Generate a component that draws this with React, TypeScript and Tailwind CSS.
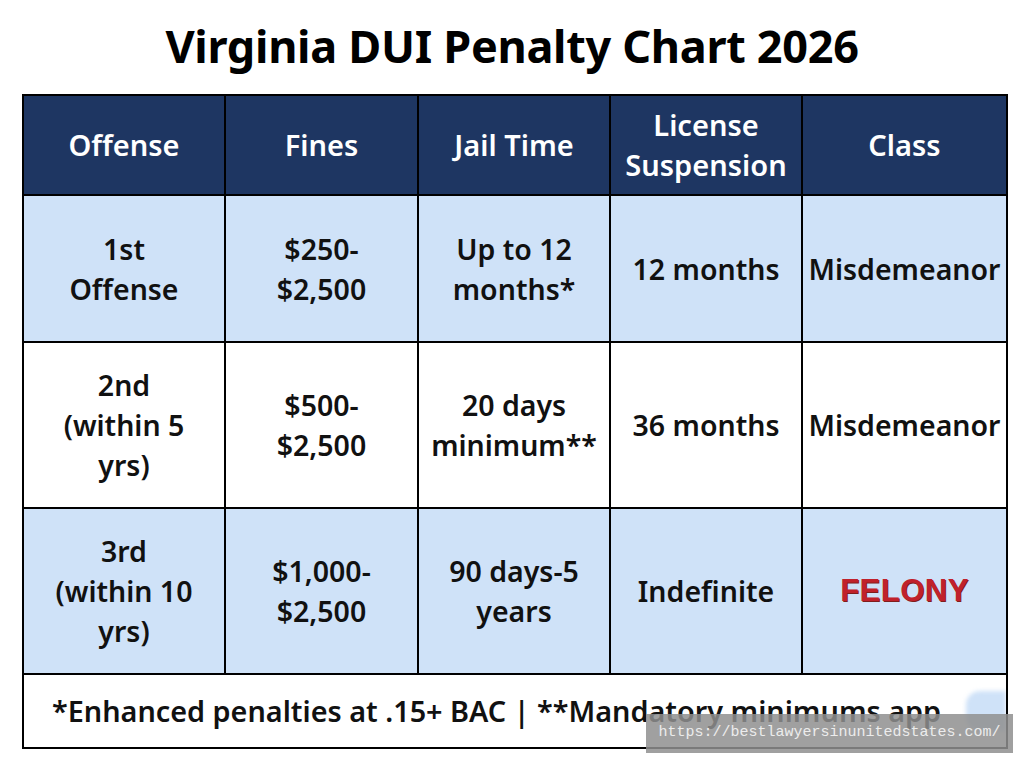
const rows = [
  {
    bg: "bg-[#cfe2f8]",
    h: "h-[147px]",
    cells: [["1st", "Offense"], ["$250-", "$2,500"], ["Up to 12", "months*"], ["12 months"], ["Misdemeanor"]],
  },
  {
    bg: "bg-white",
    h: "h-[166px]",
    cells: [["2nd", "(within 5", "yrs)"], ["$500-", "$2,500"], ["20 days", "minimum**"], ["36 months"], ["Misdemeanor"]],
  },
  {
    bg: "bg-[#cfe2f8]",
    h: "h-[166px]",
    cells: [["3rd", "(within 10", "yrs)"], ["$1,000-", "$2,500"], ["90 days-5", "years"], ["Indefinite"], null],
  },
];

const headers = [["Offense"], ["Fines"], ["Jail Time"], ["License", "Suspension"], ["Class"]];

export default function App() {
  return (
    <div
      className="relative w-[1024px] h-[765px] bg-white overflow-hidden"
      style={{ fontFamily: '"Noto Sans", "Open Sans", sans-serif' }}
    >
      <h1 className="h-[94px] flex items-center justify-center text-[45px] font-bold text-black tracking-[-0.3px] pb-[2px]">
        Virginia DUI Penalty Chart 2026
      </h1>

      <div className="ml-[22px] w-[986px] border-2 border-black">
        {/* header */}
        <div className="grid grid-cols-[202px_193px_192px_192px_203px] h-[100px] bg-[#1e3662] border-b-2 border-black">
          {headers.map((lines, i) => (
            <div
              key={i}
              className={`flex flex-col items-center justify-center text-white text-[29px] font-semibold leading-[40px] ${
                i < 4 ? "border-r-2 border-black" : ""
              }`}
            >
              {lines.map((l) => (
                <span key={l}>{l}</span>
              ))}
            </div>
          ))}
        </div>

        {rows.map((row, r) => (
          <div
            key={r}
            className={`grid grid-cols-[202px_193px_192px_192px_203px] ${row.h} ${row.bg} border-b-2 border-black`}
          >
            {row.cells.map((lines, i) => (
              <div
                key={i}
                className={`flex flex-col items-center justify-center text-[#111] text-[28.5px] font-semibold leading-[40px] ${
                  i < 4 ? "border-r-2 border-black" : ""
                }`}
              >
                {lines ? (
                  lines.map((l) => <span key={l}>{l}</span>)
                ) : (
                  <span
                    className="text-[#c0212b] text-[31px] font-bold tracking-[0.5px]"
                    style={{ fontFamily: '"Liberation Sans", Arial, sans-serif', textShadow: "1px 1px 0 #7f1d1d" }}
                  >
                    FELONY
                  </span>
                )}
              </div>
            ))}
          </div>
        ))}

        {/* footer note */}
        <div className="h-[72px] flex items-center pl-[28px] overflow-hidden">
          <span className="w-[890px] shrink-0 overflow-hidden whitespace-nowrap text-[28.8px] font-semibold text-[#111]">
            *Enhanced penalties at .15+ BAC | **Mandatory minimums app
          </span>
          <div className="ml-auto h-[40px] w-[40px] bg-[#cfe2f8] rounded-l-[14px] blur-[2px]" />
        </div>
      </div>

      {/* watermark */}
      <div
        className="absolute left-[646px] top-[714px] w-[367px] h-[39px] bg-[#8f8f8f]/85 flex items-center justify-center text-[#ececec] text-[15px]"
        style={{ fontFamily: '"Liberation Mono", "DejaVu Sans Mono", monospace' }}
      >
        https://bestlawyersinunitedstates.com/
      </div>
    </div>
  );
}
